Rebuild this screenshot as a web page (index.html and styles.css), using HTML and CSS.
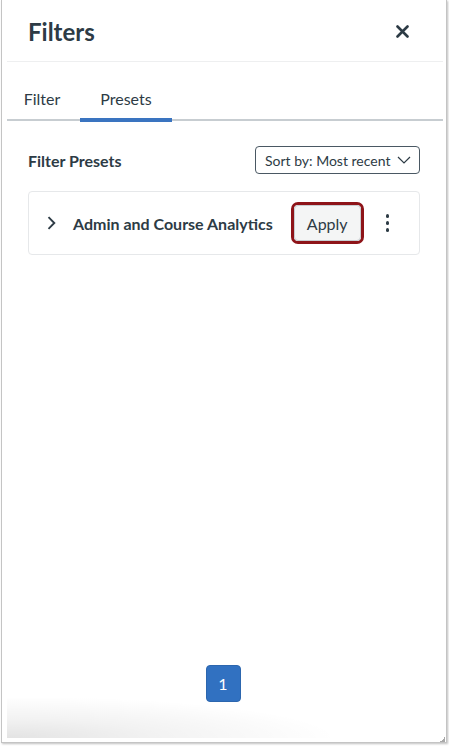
FILE: index.html
```html
<!DOCTYPE html>
<html lang="en">
<head>
<meta charset="utf-8">
<title>Filters</title>
<link rel="stylesheet" href="styles.css">
</head>
<body>
<div class="frame">
  <div class="panel">
    <header class="header">
      <h1 class="title">Filters</h1>
      <button class="close" aria-label="Close">
        <svg width="13" height="13" viewBox="0 0 13 13"><path d="M1.5 1.5 L11.5 11.5 M11.5 1.5 L1.5 11.5" stroke="#2d3b45" stroke-width="2.6" stroke-linecap="round" fill="none"/></svg>
      </button>
    </header>
    <nav class="tabs">
      <div class="tab tab-filter">Filter</div>
      <div class="tab tab-presets active">Presets</div>
    </nav>
    <section class="body">
      <div class="presets-row">
        <h2 class="presets-title">Filter Presets</h2>
        <div class="select">
          <span class="select-text">Sort by: Most recent</span>
          <svg width="14" height="8" viewBox="0 0 14 8"><path d="M1 1 L7 7 L13 1" stroke="#2d3b45" stroke-width="1.2" fill="none"/></svg>
        </div>
      </div>
      <div class="card">
        <svg class="chev" width="9" height="14" viewBox="0 0 9 14"><path d="M1.5 1.2 L7.3 7 L1.5 12.8" stroke="#2d3b45" stroke-width="1.9" fill="none"/></svg>
        <span class="card-title">Admin and Course Analytics</span>
        <div class="apply-ring"><button class="apply">Apply</button></div>
        <div class="kebab"><i></i><i></i><i></i></div>
      </div>
    </section>
    <div class="spacer"></div>
    <footer class="pager">
      <button class="page">1</button>
    </footer>
    <div class="grip"></div>
  </div>
</div>
</body>
</html>
```
FILE: styles.css
```css
* { box-sizing: border-box; }
html, body { margin: 0; padding: 0; background: #fff; }
body { font-family: Lato, "Open Sans", "Liberation Sans", sans-serif; color: #2d3b45; width: 449px; height: 746px; overflow: hidden; }

.frame {
  margin-left: 1px;
  width: 446px;
  height: 743px;
  border: 1px solid #c4c4c4;
  border-top: none;
  box-shadow: 1px 1px 2px rgba(0,0,0,0.25);
  background: #fff;
}
.panel {
  position: relative;
  height: 100%;
  display: flex;
  flex-direction: column;
  padding: 0 3px 4px 5px;
}
.panel::after {
  content: "";
  position: absolute;
  left: 5px;
  right: 3px;
  bottom: 4px;
  height: 40px;
  background: radial-gradient(ellipse 330px 42px at 0 100%, rgba(0,0,0,0.11), rgba(0,0,0,0.05) 45%, rgba(0,0,0,0) 100%);
  pointer-events: none;
}
.header {
  height: 62px;
  border-bottom: 1px solid #eeeff0;
  display: flex;
  align-items: center;
  justify-content: space-between;
  padding: 2px 34px 0 21px;
}
.title { margin: 0; font-size: 24px; font-weight: 700; line-height: 30px; }
.close { border: 0; background: none; padding: 0; width: 13px; height: 13px; display: flex; }

.tabs {
  margin-top: 20px;
  display: flex;
  border-bottom: 2px solid #c7cdd1;
}
.tab {
  height: 40px;
  padding-top: 7px;
  font-size: 16px;
  line-height: 20px;
  text-align: center;
  border-bottom: 4px solid transparent;
  margin-bottom: -3px;
}
.tab-filter { width: 73px; padding-right: 3px; }
.tab-presets { width: 92px; }
.tab.active { border-bottom-color: #3a74c0; }

.body { padding: 0 23px 0 21px; }
.presets-row {
  margin-top: 25px;
  display: flex;
  justify-content: space-between;
  align-items: center;
}
.presets-title { margin: 0; font-size: 16px; font-weight: 700; }
.select {
  width: 165px;
  height: 28px;
  border: 1px solid #4a5863;
  border-radius: 4px;
  display: flex;
  align-items: center;
  justify-content: space-between;
  padding: 0 8px 0 9px;
  font-size: 14px;
  white-space: nowrap;
}
.select-text { white-space: nowrap; }
.card {
  margin-top: 17px;
  height: 64px;
  border: 1px solid #e6e8ea;
  border-radius: 4px;
  display: flex;
  align-items: center;
  padding: 0 0 0 18px;
}
.chev { flex: none; }
.card-title { margin-left: 17px; font-size: 16px; font-weight: 700; white-space: nowrap; }
.apply-ring {
  margin-left: 18px;
  border: 3px solid #8e1419;
  border-radius: 7px;
  width: 73px;
  height: 42px;
  display: flex;
}
.apply {
  flex: 1;
  border: 1px solid #c7cdd1;
  border-radius: 4px;
  background: #f4f5f5;
  font-family: inherit;
  font-size: 16px;
  color: #2d3b45;
  padding: 0;
  margin: 0;
}
.kebab {
  margin-left: 22px;
  display: flex;
  flex-direction: column;
  gap: 3.5px;
  align-items: center;
}
.kebab i { display: block; width: 3.6px; height: 3.6px; border-radius: 50%; background: #2d3b45; }

.spacer { flex: 1; }
.pager { display: flex; justify-content: center; padding: 0 4px 36px 0; }
.page {
  width: 35px;
  height: 37px;
  background: #3171c1;
  border: 1px solid #2c66ae;
  border-radius: 4px;
  color: #fff;
  font-family: inherit;
  font-size: 16px;
  padding: 0;
}
.grip {
  position: absolute;
  right: 1px;
  bottom: 0;
  width: 5px;
  height: 5px;
  background: linear-gradient(135deg, transparent 50%, #a8a8a8 50%);
}
```
